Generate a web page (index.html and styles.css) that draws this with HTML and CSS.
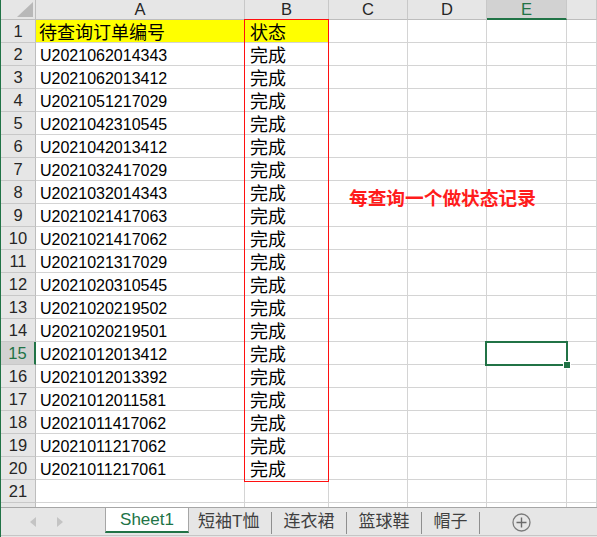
FILE: index.html
```html
<!DOCTYPE html>
<html lang="zh-CN">
<head>
<meta charset="utf-8">
<title>Sheet</title>
<link rel="stylesheet" href="styles.css">
</head>
<body>
<div class="app">
  <div class="sheet">
    <div class="grid">
      <div class="h corner"><svg width="16" height="15" viewBox="0 0 16 15"><polygon points="16,0 16,15 0,15" fill="#b8b8b8"/></svg></div>
      <div class="h">A</div><div class="h">B</div><div class="h">C</div><div class="h">D</div><div class="h sel">E</div><div class="h"></div>

      <div class="rh">1</div><div class="c cjk yellow">待查询订单编号</div><div class="c cjk yellow bcol">状态</div><div class="c"></div><div class="c"></div><div class="c"></div><div class="c"></div>
      <div class="rh">2</div><div class="c">U2021062014343</div><div class="c cjk bcol">完成</div><div class="c"></div><div class="c"></div><div class="c"></div><div class="c"></div>
      <div class="rh">3</div><div class="c">U2021062013412</div><div class="c cjk bcol">完成</div><div class="c"></div><div class="c"></div><div class="c"></div><div class="c"></div>
      <div class="rh">4</div><div class="c">U2021051217029</div><div class="c cjk bcol">完成</div><div class="c"></div><div class="c"></div><div class="c"></div><div class="c"></div>
      <div class="rh">5</div><div class="c">U2021042310545</div><div class="c cjk bcol">完成</div><div class="c"></div><div class="c"></div><div class="c"></div><div class="c"></div>
      <div class="rh">6</div><div class="c">U2021042013412</div><div class="c cjk bcol">完成</div><div class="c"></div><div class="c"></div><div class="c"></div><div class="c"></div>
      <div class="rh">7</div><div class="c">U2021032417029</div><div class="c cjk bcol">完成</div><div class="c"></div><div class="c"></div><div class="c"></div><div class="c"></div>
      <div class="rh">8</div><div class="c">U2021032014343</div><div class="c cjk bcol">完成</div><div class="c"></div><div class="c"></div><div class="c"></div><div class="c"></div>
      <div class="rh">9</div><div class="c">U2021021417063</div><div class="c cjk bcol">完成</div><div class="c"></div><div class="c"></div><div class="c"></div><div class="c"></div>
      <div class="rh">10</div><div class="c">U2021021417062</div><div class="c cjk bcol">完成</div><div class="c"></div><div class="c"></div><div class="c"></div><div class="c"></div>
      <div class="rh">11</div><div class="c">U2021021317029</div><div class="c cjk bcol">完成</div><div class="c"></div><div class="c"></div><div class="c"></div><div class="c"></div>
      <div class="rh">12</div><div class="c">U2021020310545</div><div class="c cjk bcol">完成</div><div class="c"></div><div class="c"></div><div class="c"></div><div class="c"></div>
      <div class="rh">13</div><div class="c">U2021020219502</div><div class="c cjk bcol">完成</div><div class="c"></div><div class="c"></div><div class="c"></div><div class="c"></div>
      <div class="rh">14</div><div class="c">U2021020219501</div><div class="c cjk bcol">完成</div><div class="c"></div><div class="c"></div><div class="c"></div><div class="c"></div>
      <div class="rh sel">15</div><div class="c">U2021012013412</div><div class="c cjk bcol">完成</div><div class="c"></div><div class="c"></div><div class="c"></div><div class="c"></div>
      <div class="rh">16</div><div class="c">U2021012013392</div><div class="c cjk bcol">完成</div><div class="c"></div><div class="c"></div><div class="c"></div><div class="c"></div>
      <div class="rh">17</div><div class="c">U2021012011581</div><div class="c cjk bcol">完成</div><div class="c"></div><div class="c"></div><div class="c"></div><div class="c"></div>
      <div class="rh">18</div><div class="c">U2021011417062</div><div class="c cjk bcol">完成</div><div class="c"></div><div class="c"></div><div class="c"></div><div class="c"></div>
      <div class="rh">19</div><div class="c">U2021011217062</div><div class="c cjk bcol">完成</div><div class="c"></div><div class="c"></div><div class="c"></div><div class="c"></div>
      <div class="rh">20</div><div class="c">U2021011217061</div><div class="c cjk bcol">完成</div><div class="c"></div><div class="c"></div><div class="c"></div><div class="c"></div>
      <div class="rh">21</div><div class="c"></div><div class="c"></div><div class="c"></div><div class="c"></div><div class="c"></div><div class="c"></div>
      <div class="rh"></div><div class="c"></div><div class="c"></div><div class="c"></div><div class="c"></div><div class="c"></div><div class="c"></div>
    </div>
    <div class="redbox"></div>
    <div class="note">每查询一个做状态记录</div>
    <div class="selection"><span class="handle"></span></div>
  </div>
  <div class="tabs">
    <div class="nav">
      <span class="arrow left"></span>
      <span class="arrow right"></span>
    </div>
    <div class="tab active">Sheet1</div>
    <div class="tab first">短袖T恤</div><span class="sep"></span>
    <div class="tab">连衣裙</div><span class="sep"></span>
    <div class="tab">篮球鞋</div><span class="sep"></span>
    <div class="tab">帽子</div><span class="sep"></span>
    <div class="add"><svg width="19" height="19" viewBox="0 0 19 19"><circle cx="9.5" cy="9.5" r="8.5" fill="none" stroke="#7b7b7b" stroke-width="1.3"/><path d="M9.5 4.5v10M4.5 9.5h10" stroke="#6a6a6a" stroke-width="1.4"/></svg></div>
  </div>
</div>
</body>
</html>
```
FILE: styles.css
```css
* {
  box-sizing: border-box;
  margin: 0;
  padding: 0;
}

body {
  width: 597px;
  height: 537px;
  overflow: hidden;
  background: #e6e6e6;
  font-family: "Liberation Sans", "Noto Sans CJK SC", sans-serif;
}

.app {
  height: 537px;
  border-left: 1px solid #217346;
  display: flex;
  flex-direction: column;
}

.sheet {
  position: relative;
  height: 507px;
  flex: none;
  overflow: hidden;
  background: #fff;
}

.grid {
  display: grid;
  grid-template-columns: 35px 209px 84px 79px 79px 80px 1fr;
  grid-template-rows: 20px repeat(22, 23px);
}

.h {
  background: #e6e6e6;
  border-right: 1px solid #c8c8c8;
  border-bottom: 1px solid #bdbdbd;
  display: flex;
  align-items: center;
  justify-content: center;
  font-size: 16.5px;
  color: #262626;
}

.h.sel {
  background: #d2d2d2;
  color: #217346;
  border-bottom: 2px solid #217346;
}

.corner {
  justify-content: flex-end;
  align-items: flex-end;
  padding: 0 2px 2px 0;
  border-right: 1px solid #bdbdbd;
}

.rh {
  background: #e6e6e6;
  border-right: 1px solid #bdbdbd;
  border-bottom: 1px solid #c8c8c8;
  display: flex;
  align-items: center;
  justify-content: center;
  font-size: 16.5px;
  color: #262626;
}

.rh.sel {
  background: #d2d2d2;
  color: #217346;
  border-right: 2px solid #217346;
}

.c {
  border-right: 1px solid #d4d4d4;
  border-bottom: 1px solid #d4d4d4;
  font-size: 16px;
  line-height: 19px;
  color: #000;
  display: flex;
  align-items: flex-end;
  padding-left: 4px;
  white-space: nowrap;
}

.c.cjk {
  font-family: "Noto Sans CJK SC", sans-serif;
  font-size: 18px;
  line-height: 22px;
  padding-left: 3px;
}

.c.bcol {
  padding-left: 5px;
}

.c.yellow {
  background: #ffff00;
}

.redbox {
  position: absolute;
  left: 243px;
  top: 19px;
  width: 85px;
  height: 463px;
  border: 1px solid #ff1010;
}

.note {
  position: absolute;
  left: 348px;
  top: 187px;
  font-family: "Noto Sans CJK SC", sans-serif;
  font-weight: 700;
  font-size: 18.7px;
  line-height: 20px;
  color: #ff1c1c;
  white-space: nowrap;
}

.selection {
  position: absolute;
  left: 484px;
  top: 341px;
  width: 83px;
  height: 25px;
  border: 2px solid #217346;
}

.handle {
  position: absolute;
  right: -5px;
  bottom: -5px;
  width: 8px;
  height: 8px;
  background: #217346;
  border: 1px solid #fff;
}

.tabs {
  height: 29px;
  flex: none;
  background: #e6e6e6;
  border-top: 1px solid #a6a6a6;
  border-bottom: 1px solid #c6c6c6;
  display: flex;
  align-items: center;
  font-size: 17px;
  color: #3f3f3f;
}

.nav {
  width: 104px;
  align-self: stretch;
  display: flex;
  align-items: center;
  padding-left: 29px;
  gap: 21px;
}

.arrow {
  width: 0;
  height: 0;
  border-top: 5px solid transparent;
  border-bottom: 5px solid transparent;
}

.arrow.left {
  border-right: 6px solid #c4c4c4;
}

.arrow.right {
  border-left: 6px solid #c4c4c4;
}

.tab {
  padding: 0 12px 0 11px;
  white-space: nowrap;
  line-height: 22px;
}

.tab.first {
  padding-left: 9px;
}

.tab.active {
  align-self: flex-start;
  width: 84px;
  height: 25px;
  background: #fff;
  border-left: 1px solid #a6a6a6;
  border-right: 1px solid #a6a6a6;
  border-bottom: 2px solid #217346;
  color: #217346;
  display: flex;
  align-items: center;
  justify-content: center;
  padding: 0;
  font-size: 17px;
}

.sep {
  width: 1px;
  height: 22px;
  background: #8f8f8f;
  margin-top: 2px;
}

.add {
  margin-left: 32px;
  display: flex;
  align-items: center;
  margin-top: 2px;
}
```
